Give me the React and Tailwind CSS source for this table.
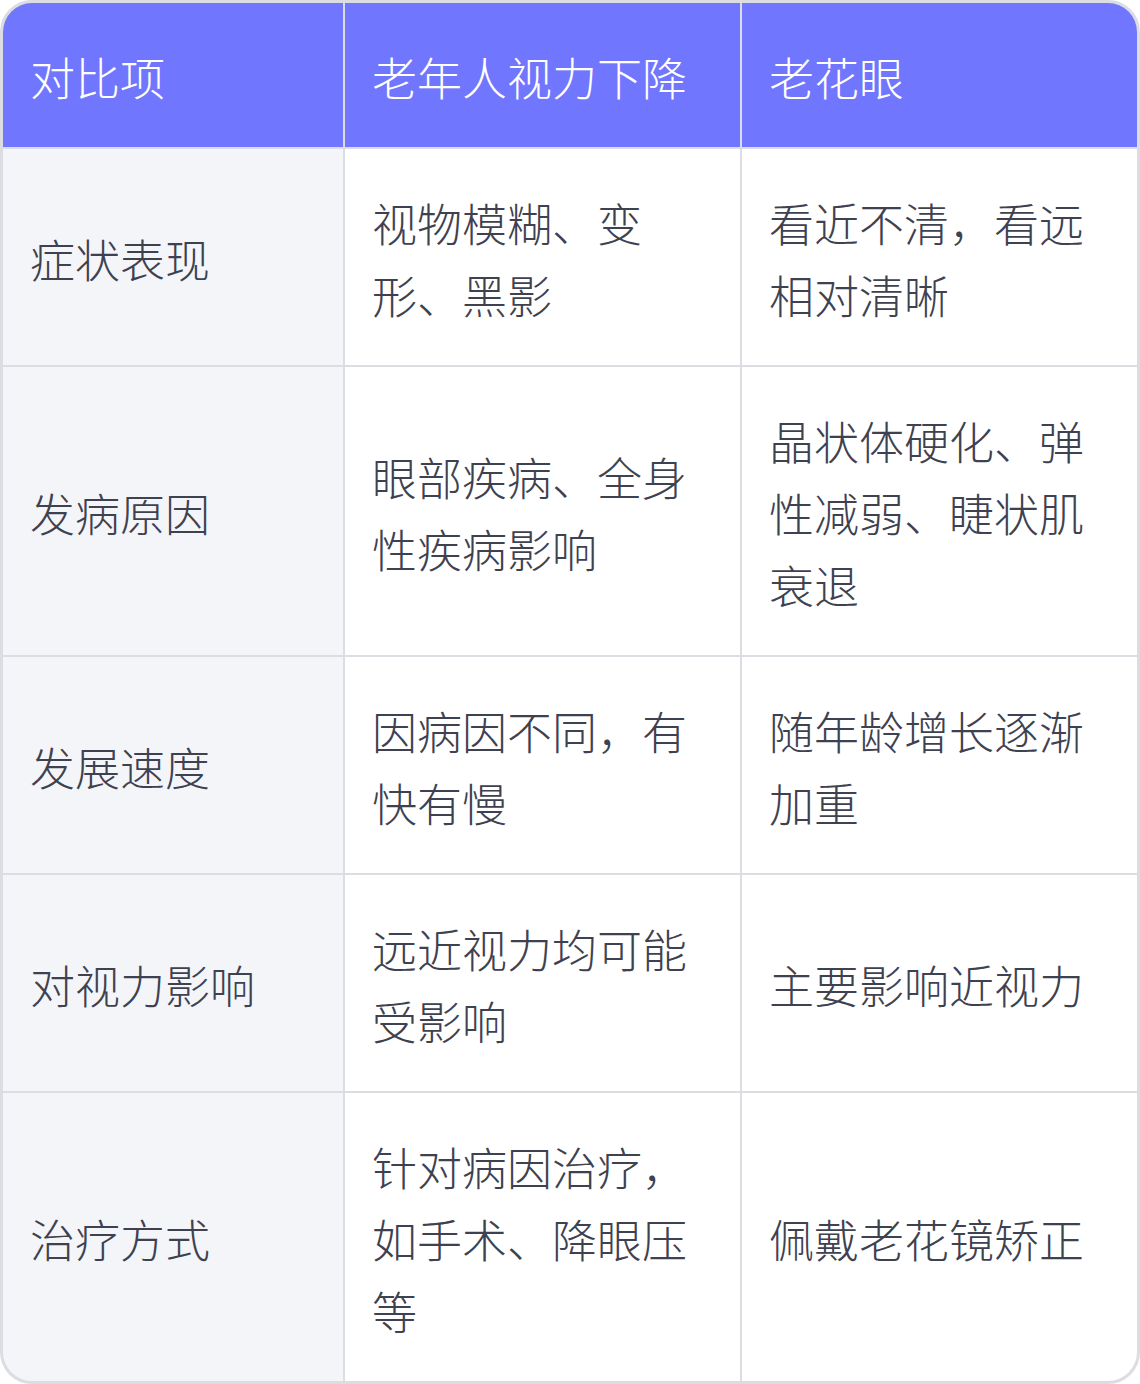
export default function App() {
  const rows = [
    ['症状表现', '视物模糊、变形、黑影', '看近不清，看远相对清晰'],
    ['发病原因', '眼部疾病、全身性疾病影响', '晶状体硬化、弹性减弱、睫状肌衰退'],
    ['发展速度', '因病因不同，有快有慢', '随年龄增长逐渐加重'],
    ['对视力影响', '远近视力均可能受影响', '主要影响近视力'],
    ['治疗方式', '针对病因治疗，如手术、降眼压等', '佩戴老花镜矫正'],
  ];
  const head = ['对比项', '老年人视力下降', '老花眼'];

  return (
    <div
      className="w-[1140px] h-[1384px] bg-white"
      style={{ fontFamily: '"Noto Sans CJK SC", "Noto Sans", sans-serif' }}
    >
      <div className="h-full border-[3px] border-[#dcdde2] rounded-[32px] overflow-hidden bg-[#dcdde2]">
        <div className="grid grid-cols-[340px_395px_1fr] gap-[2px] text-[45px] leading-[72px] font-light">
          {head.map((h) => (
            <div key={h} className="bg-[#7176fe] text-white px-[27px] pt-[38px] pb-[34px]">
              {h}
            </div>
          ))}
          {rows.map((r) => (
            <>
              <div key={r[0]} className="bg-[#f4f5f9] text-[#3e4150] px-[27px] pt-[38px] pb-[34px] flex items-center">
                {r[0]}
              </div>
              <div className="bg-white text-[#3e4150] px-[27px] pt-[38px] pb-[34px] flex items-center">
                {r[1]}
              </div>
              <div className="bg-white text-[#3e4150] px-[27px] pt-[38px] pb-[34px] flex items-center">
                {r[2]}
              </div>
            </>
          ))}
        </div>
      </div>
    </div>
  );
}
